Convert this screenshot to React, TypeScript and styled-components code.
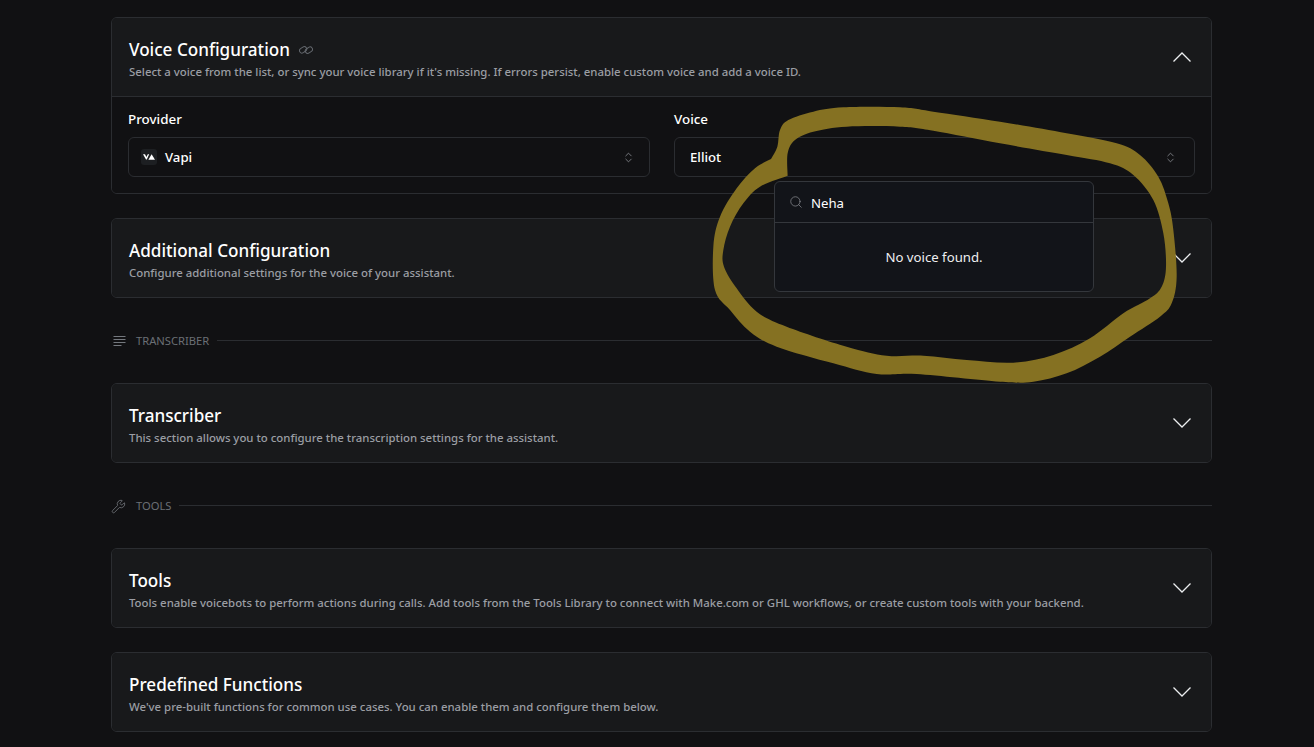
import React from "react";
import styled, { createGlobalStyle } from "styled-components";
import { Search, Wrench, ChevronsUpDown } from "lucide-react";

const Global = createGlobalStyle`
  html, body { margin: 0; padding: 0; background: #111113; height: 100%; overflow: hidden; }
  * { box-sizing: border-box; }
  body { font-family: "Noto Sans", "Open Sans", "Liberation Sans", sans-serif; color: #fff; }
`;

const Page = styled.div`
  position: relative;
  width: 1314px;
  height: 747px;
  overflow: hidden;
  padding: 17px 102px 0 111px;
  display: flex;
  flex-direction: column;
`;

const Card = styled.section<{ $mb?: number }>`
  flex: none;
  border: 1px solid #2b2d31;
  border-radius: 6px;
  overflow: hidden;
  margin-bottom: ${(p) => p.$mb ?? 0}px;
`;

const CardHead = styled.header<{ $divider?: boolean }>`
  height: ${(p) => (p.$divider ? 79 : 78)}px;
  background: #18191b;
  padding: 0 19px 0 17px;
  display: flex;
  align-items: center;
  justify-content: space-between;
  border-bottom: ${(p) => (p.$divider ? "1px solid #2b2d31" : "none")};
`;

const HeadText = styled.div`
  display: flex;
  flex-direction: column;
  gap: 2px;
  padding-top: 4px;
`;

const TitleRow = styled.div`
  display: flex;
  align-items: center;
  gap: 9px;
`;

const Title = styled.h2`
  margin: 0;
  font-size: 17.1px;
  line-height: 24px;
  font-weight: 500;
  color: #fff;
`;

const Subtitle = styled.p`
  margin: 0;
  font-size: 11.4px;
  line-height: 16px;
  font-weight: 500;
  color: #9b9ea4;
`;

const Body = styled.div`
  display: grid;
  grid-template-columns: 522px 521px;
  column-gap: 24px;
  padding: 13px 16px 16px;
  height: 96px;
  background: #111113;
`;

const Field = styled.div`
  display: flex;
  flex-direction: column;
  gap: 8px;
`;

const Label = styled.label`
  font-size: 13.4px;
  line-height: 19px;
  font-weight: 500;
  color: #fff;
`;

const Select = styled.div<{ $right: number }>`
  height: 40px;
  border: 1px solid #2b2d31;
  border-radius: 6px;
  display: flex;
  align-items: center;
  padding: 0 ${(p) => p.$right}px 0 12px;
  gap: 8px;
  font-size: 13.2px;
  font-weight: 500;
  color: #fff;
`;

const SelectValue = styled.span<{ $inset?: boolean }>`
  flex: 1;
  padding-left: ${(p) => (p.$inset ? 3 : 0)}px;
`;

const LogoBox = styled.span`
  width: 16px;
  height: 16px;
  background: #1d1f22;
  border-radius: 3px;
  display: flex;
  align-items: center;
  justify-content: center;
`;

const SectionRow = styled.div<{ $mt: number; $mb: number }>`
  flex: none;
  display: flex;
  align-items: center;
  height: 16px;
  margin: ${(p) => p.$mt}px 0 ${(p) => p.$mb}px;
  color: #6b6f75;
  font-size: 11.2px;
  line-height: 16px;
`;

const SectionIcon = styled.span<{ $inset?: boolean }>`
  width: 25px;
  padding-left: ${(p) => (p.$inset ? 2 : 0)}px;
  display: flex;
  align-items: center;
  color: #74787e;
`;

const SectionRule = styled.span`
  flex: 1;
  height: 1px;
  background: #2b2d31;
  margin-left: 8px;
  margin-top: -2px;
`;

const Scribble = styled.svg`
  position: absolute;
  left: 700px;
  top: 90px;
  pointer-events: none;
`;

const Popover = styled.div`
  position: absolute;
  left: 774px;
  top: 181px;
  width: 320px;
  height: 111px;
  background: #121419;
  border: 1px solid #34373c;
  border-radius: 6px;
  display: flex;
  flex-direction: column;
`;

const SearchRow = styled.div`
  height: 41px;
  border-bottom: 1px solid #34373c;
  display: flex;
  align-items: center;
  padding: 1px 14px 0;
  gap: 8px;
  font-size: 13.2px;
  color: #fff;
  svg { color: #85888e; margin-top: -2px; }
`;

const Empty = styled.div`
  flex: 1;
  display: flex;
  align-items: center;
  justify-content: center;
  font-size: 13.2px;
  color: #eeeef0;
`;

const Chevron = ({ up }: { up?: boolean }) => (
  <svg width="20" height="12" viewBox="0 0 20 12" fill="none" stroke="#eceef0" strokeWidth="1.3">
    <polyline points={up ? "1.5,10.5 10,2 18.5,10.5" : "1.5,1.5 10,10 18.5,1.5"} />
  </svg>
);

const LinkGlyph = () => (
  <svg width="14" height="14" viewBox="0 0 14 14" fill="none" stroke="#63676d" strokeWidth="1">
    <rect x="0.4" y="4.4" width="7.6" height="4.8" rx="2.4" transform="rotate(-35 4.2 7)" />
    <rect x="6" y="4.8" width="7.6" height="4.8" rx="2.4" transform="rotate(-35 9.8 7)" />
  </svg>
);

const LinesGlyph = () => (
  <svg width="13" height="10" viewBox="0 0 13 10" fill="none" stroke="#74787e" strokeWidth="1">
    <path d="M0.5 0.5h12M0.5 3.5h12M0.5 6.5h12M0.5 9.5h8" />
  </svg>
);

const VapiMark = () => (
  <svg width="12" height="8" viewBox="0 0 12 8" fill="#fff">
    <path d="M0 1.2h2l1.4 2.8L4.8 1.2h1.4L3.8 6.6h-.8z" />
    <path d="M8.6 1.2 12 6.8H5.4z" />
  </svg>
);

type P = [number, number];

const smooth = (pts: P[]) => {
  let d = `M${pts[0][0]} ${pts[0][1]}`;
  for (let i = 0; i < pts.length - 1; i++) {
    const a = pts[Math.max(i - 1, 0)];
    const b = pts[i];
    const c = pts[i + 1];
    const e = pts[Math.min(i + 2, pts.length - 1)];
    const c1x = b[0] + (c[0] - a[0]) / 6;
    const c1y = b[1] + (c[1] - a[1]) / 6;
    const c2x = c[0] - (e[0] - b[0]) / 6;
    const c2y = c[1] - (e[1] - b[1]) / 6;
    d += `C${c1x.toFixed(1)} ${c1y.toFixed(1)} ${c2x.toFixed(1)} ${c2y.toFixed(1)} ${c[0]} ${c[1]}`;
  }
  return d + "Z";
};

const outer: P[] = [
  [213, 207], [232, 170], [240, 120], [265, 90], [340, 65], [430, 52], [600, 52], [700, 65],
  [900, 95], [1100, 130], [1250, 160], [1320, 195], [1375, 260], [1405, 340], [1420, 420],
  [1430, 560], [1415, 640], [1380, 680], [1290, 740], [1200, 800], [1100, 850], [1000, 875],
  [900, 875], [650, 852], [530, 852], [400, 820], [230, 770], [150, 725], [90, 660], [45, 600],
  [40, 470], [60, 380], [110, 295], [165, 235], [213, 207],
];
const inner: P[] = [
  [263, 257], [263, 190], [285, 150], [340, 125], [440, 110], [600, 110], [700, 122], [900, 160],
  [1100, 195], [1230, 220], [1300, 255], [1360, 330], [1390, 430], [1398, 530], [1385, 590],
  [1350, 625], [1270, 670], [1170, 745], [1060, 795], [940, 818], [800, 810], [670, 797],
  [560, 797], [440, 770], [260, 710], [170, 665], [110, 595], [72, 530], [70, 480], [90, 410],
  [130, 340], [180, 290], [263, 257],
];
const scribblePath = smooth(outer) + smooth(inner);

export default function App() {
  return (
    <Page>
      <Global />
      <Card $mb={24}>
        <CardHead $divider>
          <HeadText>
            <TitleRow>
              <Title>Voice Configuration</Title>
              <LinkGlyph />
            </TitleRow>
            <Subtitle>Select a voice from the list, or sync your voice library if it's missing. If errors persist, enable custom voice and add a voice ID.</Subtitle>
          </HeadText>
          <Chevron up />
        </CardHead>
        <Body>
          <Field>
            <Label>Provider</Label>
            <Select $right={14}>
              <LogoBox><VapiMark /></LogoBox>
              <SelectValue>Vapi</SelectValue>
              <ChevronsUpDown size={13} color="#8b8e94" strokeWidth={1.5} />
            </Select>
          </Field>
          <Field>
            <Label>Voice</Label>
            <Select $right={17}>
              <SelectValue $inset>Elliot</SelectValue>
              <ChevronsUpDown size={13} color="#8b8e94" strokeWidth={1.5} />
            </Select>
          </Field>
        </Body>
      </Card>

      <Card>
        <CardHead>
          <HeadText>
            <Title>Additional Configuration</Title>
            <Subtitle>Configure additional settings for the voice of your assistant.</Subtitle>
          </HeadText>
          <Chevron />
        </CardHead>
      </Card>

      <SectionRow $mt={35} $mb={34}>
        <SectionIcon $inset><LinesGlyph /></SectionIcon>
        TRANSCRIBER
        <SectionRule />
      </SectionRow>

      <Card>
        <CardHead>
          <HeadText>
            <Title>Transcriber</Title>
            <Subtitle>This section allows you to configure the transcription settings for the assistant.</Subtitle>
          </HeadText>
          <Chevron />
        </CardHead>
      </Card>

      <SectionRow $mt={35} $mb={34}>
        <SectionIcon><Wrench size={15} strokeWidth={1.3} /></SectionIcon>
        TOOLS
        <SectionRule />
      </SectionRow>

      <Card $mb={24}>
        <CardHead>
          <HeadText>
            <Title>Tools</Title>
            <Subtitle>Tools enable voicebots to perform actions during calls. Add tools from the Tools Library to connect with Make.com or GHL workflows, or create custom tools with your backend.</Subtitle>
          </HeadText>
          <Chevron />
        </CardHead>
      </Card>

      <Card>
        <CardHead>
          <HeadText>
            <Title>Predefined Functions</Title>
            <Subtitle>We've pre-built functions for common use cases. You can enable them and configure them below.</Subtitle>
          </HeadText>
          <Chevron />
        </CardHead>
      </Card>

      <Scribble width="520" height="300" viewBox="0 0 1560 900">
        <path d={scribblePath} fill="#857122" fillRule="evenodd" />
      </Scribble>

      <Popover>
        <SearchRow>
          <Search size={14} strokeWidth={1.3} />
          Neha
        </SearchRow>
        <Empty>No voice found.</Empty>
      </Popover>
    </Page>
  );
}
